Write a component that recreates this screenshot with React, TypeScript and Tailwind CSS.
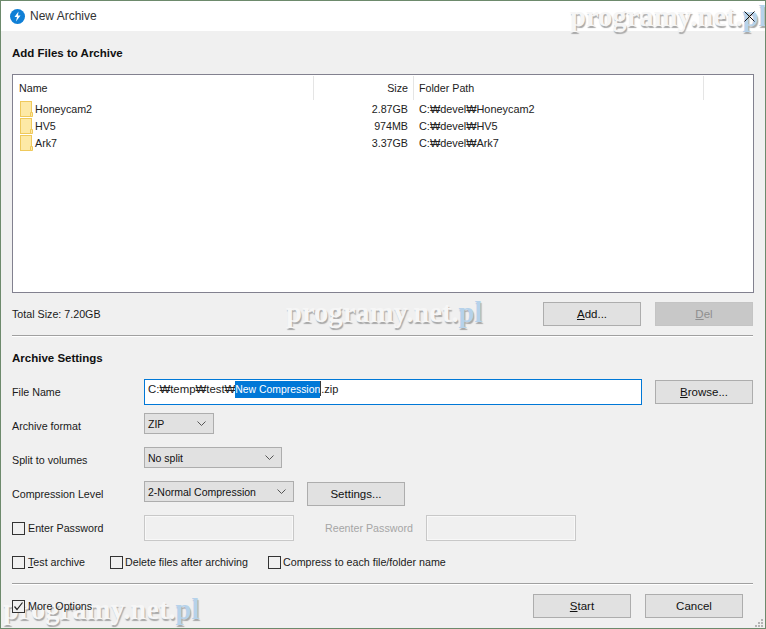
import React from 'react';

const labelFont = 'text-[10.7px] leading-[16px] text-[#1a1a1a] whitespace-nowrap';

// win32 style push button
const PushButton = ({ children, disabled }: { children: React.ReactNode; disabled?: boolean }) => (
  <div
    className={
      disabled
        ? 'w-[98px] h-[24px] pt-[2px] flex items-center justify-center border border-[#c4c4c4] bg-[#c8c8c8] text-[#8f8f8f]'
        : 'w-[98px] h-[24px] pt-[2px] flex items-center justify-center border border-[#adadad] bg-[#e1e1e1] text-[#111111]'
    }
  >
    {children}
  </div>
);

const Combo = ({ text, width }: { text: string; width: string }) => (
  <div className={`${width} h-[21px] flex items-center justify-between border border-[#adadad] bg-[#e1e1e1] pl-[3px] pr-[7px] text-[10.5px] text-[#111111] whitespace-nowrap`}>
    <span className="pt-[2px]">{text}</span>
    <svg width="9" height="5" viewBox="0 0 9 5" fill="none" stroke="#555555">
      <path d="M0.5 0.5L4.5 4.5L8.5 0.5" />
    </svg>
  </div>
);

const Check = ({ checked }: { checked?: boolean }) => (
  <div className="w-[13px] h-[13px] shrink-0 border border-[#333333] bg-[#f0f0f0] flex items-center justify-center">
    {checked && (
      <svg width="11" height="11" viewBox="0 0 11 11" fill="none" stroke="#222222" strokeWidth="1.2">
        <path d="M1.5 5.5L4 8.5L9.5 1.5" />
      </svg>
    )}
  </div>
);

const Folder = () => (
  <svg width="13" height="16" viewBox="0 0 13 16" className="shrink-0">
    <rect x="0.5" y="0.5" width="11" height="15" fill="#fde9a6" stroke="#efc95b" />
    <path d="M10.5 15.5V11.5H12.5V15.5Z" fill="#fde9a6" stroke="#efc95b" />
  </svg>
);

const Watermark = ({ className }: { className: string }) => (
  <div className={`absolute font-['Liberation_Serif',serif] font-bold text-[28.6px] leading-[32px] whitespace-nowrap text-[#f6f6f6] [text-shadow:1px_2px_1px_#a8a8a8] pointer-events-none ${className}`}>
    programy.net.<span className="text-[#b6d2ea]">pl</span>
  </div>
);

const rows = [
  { name: 'Honeycam2', size: '2.87GB', path: 'C:₩devel₩Honeycam2' },
  { name: 'HV5', size: '974MB', path: 'C:₩devel₩HV5' },
  { name: 'Ark7', size: '3.37GB', path: 'C:₩devel₩Ark7' },
];

const App: React.FC = () => {
  return (
    <div className="relative w-[766px] h-[629px] overflow-hidden border border-[#6d8a6c] bg-[#f0f0f0] font-['Liberation_Sans',sans-serif] text-[11.5px] text-[#111111]">
      {/* title bar */}
      <div className="h-[30px] bg-white flex items-center justify-between pl-[9px] pr-[10px]">
        <div className="flex items-center gap-[5px]">
          <svg width="15" height="15" viewBox="0 0 15 15">
            <circle cx="7.5" cy="7.5" r="7.5" fill="#0f7fd6" />
            <path d="M8.5 2.5L4.5 8H7L6 12.5L10.5 6.5H8Z" fill="#ffffff" />
          </svg>
          <span className="text-[12px] text-[#333333]">New Archive</span>
        </div>
        <svg width="11" height="11" viewBox="0 0 11 11" fill="none" stroke="#111111" className="relative z-10">
          <path d="M0.5 0.5L10.5 10.5M10.5 0.5L0.5 10.5" />
        </svg>
      </div>

      <div className="pl-[11px] pr-[11px] pt-[14px] flex flex-col">
        <div className="font-bold leading-[16px] text-[#111111] whitespace-nowrap">Add Files to Archive</div>

        {/* file list */}
        <div className="mt-[13px] h-[219px] border border-[#82818f] bg-white text-[10.7px] text-[#222222] whitespace-nowrap">
          <div className="flex h-[24px] mt-[1px] leading-[24px]">
            <div className="w-[301px] pl-[6px] border-r border-[#e5e5e5]">Name</div>
            <div className="w-[100px] pr-[5px] text-right border-r border-[#e5e5e5]">Size</div>
            <div className="w-[290px] pl-[5px] border-r border-[#e5e5e5]">Folder Path</div>
          </div>
          <div className="mt-[1px]">
            {rows.map((row) => (
              <div key={row.name} className="flex items-center h-[17px]">
                <div className="w-[301px] pl-[7px] flex items-center gap-[2px]">
                  <Folder />
                  <span>{row.name}</span>
                </div>
                <div className="w-[100px] pr-[6px] text-right">{row.size}</div>
                <div className="pl-[5px] text-[10.9px]">{row.path}</div>
              </div>
            ))}
          </div>
        </div>

        <div className="mt-[9px] flex items-center">
          <span className={`${labelFont} flex-1`}>Total Size: 7.20GB</span>
          <div className="flex gap-[14px] mr-[1px]">
            <PushButton><span><u>A</u>dd...</span></PushButton>
            <PushButton disabled><span><u>D</u>el</span></PushButton>
          </div>
        </div>

        <div className="mt-[9px] mr-[1px] h-[2px] border-t border-[#a0a0a0] border-b-white border-b" />

        <div className="mt-[13px] font-bold leading-[16px] whitespace-nowrap">Archive Settings</div>

        {/* archive settings */}
        <div className="mt-[13px] flex items-center">
          <span className={`${labelFont} w-[132px]`}>File Name</span>
          <div className="w-[498px] h-[26px] border border-[#0078d7] bg-white pl-[3px] pt-[1px] leading-[17px] text-[#222222] flex items-start">
            <span className="whitespace-pre text-[11.4px]">C:₩temp₩test₩</span>
            <span className="bg-[#0078d7] text-white whitespace-pre h-[17px] text-[10.4px]">New Compression</span>
            <span className="w-[1px] h-[15px] bg-[#3a3a3a]" />
            <span className="whitespace-pre text-[11px]">.zip</span>
          </div>
          <div className="ml-[13px]">
            <PushButton><span><u>B</u>rowse...</span></PushButton>
          </div>
        </div>

        <div className="mt-[8px] flex items-start">
          <span className={`${labelFont} w-[132px] pt-[5px]`}>Archive format</span>
          <Combo text="ZIP" width="w-[70px]" />
        </div>

        <div className="mt-[13px] flex items-start">
          <span className={`${labelFont} w-[132px] pt-[5px]`}>Split to volumes</span>
          <Combo text="No split" width="w-[138px]" />
        </div>

        <div className="mt-[13px] flex items-start h-[25px]">
          <span className={`${labelFont} w-[132px] pt-[5px]`}>Compression Level</span>
          <Combo text="2-Normal Compression" width="w-[150px]" />
          <div className="ml-[13px] mt-[1px]">
            <PushButton>Settings...</PushButton>
          </div>
        </div>

        <div className="mt-[9px] flex items-center">
          <div className="w-[132px] flex items-center gap-[3px]">
            <Check />
            <span className={labelFont}>Enter Password</span>
          </div>
          <div className="w-[150px] h-[26px] border border-[#c8c8c8] bg-[#f0f0f0] shadow-[inset_0_0_0_1px_#f8f8f8]" />
          <span className="ml-[31px] w-[101px] text-[10.7px] text-[#a6a6a6] whitespace-nowrap">Reenter Password</span>
          <div className="w-[150px] h-[26px] border border-[#c8c8c8] bg-[#f0f0f0] shadow-[inset_0_0_0_1px_#f8f8f8]" />
        </div>

        <div className="mt-[14px] flex items-center h-[14px]">
          <div className="w-[98px] flex items-center gap-[3px]">
            <Check />
            <span className={labelFont}><u>T</u>est archive</span>
          </div>
          <div className="w-[158px] flex items-center gap-[2px]">
            <Check />
            <span className={labelFont}>Delete files after archiving</span>
          </div>
          <div className="flex items-center gap-[2px]">
            <Check />
            <span className={labelFont}>Compress to each file/folder name</span>
          </div>
        </div>

        <div className="mt-[14px] mr-[1px] h-[2px] border-t border-[#a0a0a0] border-b-white border-b" />

        <div className="mt-[9px] flex items-center">
          <div className="relative z-10 flex items-center gap-[3px] flex-1">
            <Check checked />
            <span className={labelFont}>More Options</span>
          </div>
          <div className="flex gap-[14px] mr-[11px]">
            <PushButton><span><u>S</u>tart</span></PushButton>
            <PushButton>Cancel</PushButton>
          </div>
        </div>
      </div>

      {/* size grip */}
      <svg width="10" height="10" viewBox="0 0 10 10" fill="#b4b4b4" className="absolute right-[1px] bottom-0">
        <rect x="7" y="1" width="2" height="2" />
        <rect x="4" y="4" width="2" height="2" />
        <rect x="7" y="4" width="2" height="2" />
        <rect x="1" y="7" width="2" height="2" />
        <rect x="4" y="7" width="2" height="2" />
        <rect x="7" y="7" width="2" height="2" />
      </svg>

      <Watermark className="left-[569px] top-[0px]" />
      <Watermark className="left-[285px] top-[296px]" />
      <Watermark className="left-[2px] top-[593px]" />
    </div>
  );
};

export default App;
